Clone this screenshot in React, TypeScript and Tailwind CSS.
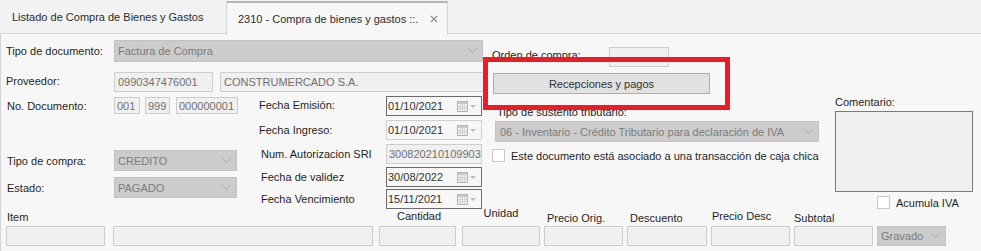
import React from "react";

const Chevron = () => (
  <svg width="9" height="6" viewBox="0 0 9 6" className="shrink-0">
    <path d="M0.5 0.5 L4.5 4.5 L8.5 0.5" fill="none" stroke="#a9a9a9" strokeWidth="1" />
  </svg>
);

const CalIcon = () => (
  <svg width="20" height="11" viewBox="0 0 20 11" className="shrink-0">
    <rect x="0.5" y="0.5" width="10" height="10" fill="#f4f4f4" stroke="#b5b5b5" />
    <rect x="1" y="1" width="9" height="2" fill="#c9c9c9" />
    <path d="M1 5.5 H10 M1 7.5 H10 M3.5 3 V10 M5.5 3 V10 M7.5 3 V10" stroke="#d2d2d2" strokeWidth="1" />
    <path d="M13 4 L19 4 L16 7 Z" fill="#bdbdbd" />
  </svg>
);

function Combo({ text, cls }: { text: string; cls: string }) {
  return (
    <div className={`flex items-center justify-between bg-[#cccccc] border border-[#c2c2c2] pl-[3px] pr-[5px] text-[#7b7b7b] ${cls}`}>
      <span className="whitespace-nowrap">{text}</span>
      <Chevron />
    </div>
  );
}

function Box({ text, cls }: { text?: string; cls: string }) {
  return (
    <div className={`flex items-center overflow-hidden whitespace-nowrap bg-[#f0f0f0] border border-[#cdcdcd] pl-[2px] text-[#6f6f6f] ${cls}`}>
      {text}
    </div>
  );
}

function DateBox({ text, dark }: { text: string; dark?: boolean }) {
  return (
    <div
      className={`flex items-center justify-between w-[96px] h-[20px] bg-[#f7f7f7] border pl-[1px] pr-[4px] text-[#333333] ${
        dark ? "border-[#6b6b6b]" : "border-[#d0d0d0]"
      }`}
    >
      <span>{text}</span>
      <CalIcon />
    </div>
  );
}

function Check() {
  return <div className="w-[13px] h-[13px] bg-white border border-[#c8c8c8] shrink-0" />;
}

export default function App() {
  return (
    <div className="w-[981px] h-[251px] overflow-hidden bg-[#f2f2f2] text-[11px] leading-[14px] text-[#1f1f1f] font-['Liberation_Sans',Arial,sans-serif] relative">
      {/* Tabs */}
      <div className="flex h-[34px]">
        <div className="w-[226px] h-[34px] border-b border-[#d4d4d4] flex items-center pl-[12px] text-[#2b2b2b]">
          Listado de Compra de Bienes y Gastos
        </div>
        <div className="w-[222px] h-[34px] mt-[1px] border-t-2 border-x border-t-[#b7b7b7] border-x-[#d4d4d4] bg-[#f7f7f7] flex items-center pl-[11px] pr-[9px] justify-between text-[#2b2b2b]">
          <span>2310 - Compra de bienes y gastos ::.</span>
          <svg width="8" height="8" viewBox="0 0 8 8">
            <path d="M1 1 L7 7 M7 1 L1 7" stroke="#8a8a8a" strokeWidth="1.1" />
          </svg>
        </div>
        <div className="flex-1 h-[34px] border-b border-[#d4d4d4]" />
      </div>

      {/* Body */}
      <div className="flex flex-col h-[217px] border-l border-[#d4d4d4] bg-[#f7f7f7]">
        <div className="flex h-[175px]">
          {/* Column A */}
          <div className="w-[489px] pl-[5px] flex flex-col shrink-0">
            <div className="mt-[6px] h-[22px] flex items-center">
              <div className="w-[108px]">Tipo de documento:</div>
              <Combo text="Factura de Compra" cls="w-[369px] h-[22px]" />
            </div>
            <div className="mt-[10px] h-[20px] flex">
              <div className="w-[108px] -mt-[3px] flex items-center">Proveedor:</div>
              <Box text="0990347476001" cls="w-[99px] h-[20px] pl-[3px]" />
              <Box text="CONSTRUMERCADO S.A." cls="ml-[7px] w-[267px] h-[20px] pl-[3px]" />
            </div>
            <div className="flex">
              <div className="w-[232px] flex flex-col">
                <div className="mt-[5px] h-[17px] flex items-center">
                  <div className="w-[108px] pl-[1px]">No. Documento:</div>
                  <Box text="001" cls="w-[26px] h-[17px]" />
                  <Box text="999" cls="ml-[5px] w-[25px] h-[17px]" />
                  <Box text="000000001" cls="ml-[6px] w-[62px] h-[17px]" />
                </div>
                <div className="mt-[36px] h-[21px] flex items-center">
                  <div className="w-[108px] pl-[1px]">Tipo de compra:</div>
                  <Combo text="CREDITO" cls="w-[123px] h-[21px]" />
                </div>
                <div className="mt-[6px] h-[21px] flex items-center">
                  <div className="w-[108px] pl-[1px]">Estado:</div>
                  <Combo text="PAGADO" cls="w-[123px] h-[21px]" />
                </div>
              </div>
              <div className="ml-[21px] w-[223px] flex flex-col">
                <div className="mt-[4px] h-[20px] flex items-center">
                  <div className="w-[127px] -mt-[3px]">Fecha Emisión:</div>
                  <DateBox text="01/10/2021" dark />
                </div>
                <div className="mt-[4px] h-[20px] flex items-center">
                  <div className="w-[127px]">Fecha Ingreso:</div>
                  <DateBox text="01/10/2021" />
                </div>
                <div className="mt-[4px] h-[20px] flex items-center">
                  <div className="w-[127px] pl-[2px]">Num. Autorizacion SRI</div>
                  <Box text="300820210109903·" cls="w-[96px] h-[20px]" />
                </div>
                <div className="mt-[3px] h-[20px] flex items-center">
                  <div className="w-[127px] pl-[2px]">Fecha de validez</div>
                  <DateBox text="30/08/2022" dark />
                </div>
                <div className="mt-[2px] h-[20px] flex items-center">
                  <div className="w-[127px] pl-[2px]">Fecha Vencimiento</div>
                  <DateBox text="15/11/2021" dark />
                </div>
              </div>
            </div>
          </div>

          {/* Column B */}
          <div className="w-[345px] flex flex-col shrink-0">
            <div className="mt-[13px] h-[20px] flex items-center">
              <div className="w-[119px] pl-[2px] -mt-[4px]">Orden de compra:</div>
              <Box cls="w-[60px] h-[20px]" />
            </div>
            <div className="mt-[6px] ml-[3px] w-[217px] h-[21px] bg-[#e1e1e1] border border-[#adadad] flex items-center justify-center text-[#333333]">
              Recepciones y pagos
            </div>
            <div className="mt-[11px] pl-[7px] h-[14px]">Tipo de sustento tributario:</div>
            <Combo text="06 - Inventario - Crédito Tributario para declaración de IVA" cls="mt-[2px] ml-[5px] w-[324px] h-[21px] pl-[4px]" />
            <div className="mt-[7px] ml-[2px] h-[13px] flex items-center">
              <Check />
              <span className="ml-[6px] whitespace-nowrap">Este documento está asociado a una transacción de caja chica</span>
            </div>
          </div>

          {/* Column C */}
          <div className="w-[146px] flex flex-col shrink-0">
            <div className="mt-[61px] h-[14px]">Comentario:</div>
            <div className="mt-[2px] w-[138px] h-[87px] bg-[#efefef] border border-[#7a7a7a]" />
            <div className="mt-[4px] ml-[42px] h-[13px] flex items-center">
              <Check />
              <span className="ml-[6px]">Acumula IVA</span>
            </div>
          </div>
        </div>

        {/* Bottom item row */}
        <div className="flex">
          <div className="ml-[5px] w-[99px] flex flex-col">
            <div className="h-[17px] flex items-start"><span className="mt-[1px] pl-[1px]">Item</span></div>
            <Box cls="w-[99px] h-[20px]" />
          </div>
          <div className="ml-[8px] w-[260px] flex flex-col">
            <div className="h-[17px]" />
            <Box cls="w-[260px] h-[20px]" />
          </div>
          <div className="ml-[6px] w-[77px] flex flex-col">
            <div className="h-[17px] flex items-start justify-center"><span className="pl-[3px]">Cantidad</span></div>
            <Box cls="w-[77px] h-[20px]" />
          </div>
          <div className="ml-[6px] w-[78px] flex flex-col">
            <div className="h-[17px] flex items-start justify-center"><span className="-mt-[3px]">Unidad</span></div>
            <Box cls="w-[78px] h-[20px]" />
          </div>
          <div className="ml-[4px] w-[79px] flex flex-col">
            <div className="h-[17px] flex items-start"><span className="mt-[2px] pl-[3px]">Precio Orig.</span></div>
            <Box cls="w-[79px] h-[20px]" />
          </div>
          <div className="ml-[4px] w-[80px] flex flex-col">
            <div className="h-[17px] flex items-start"><span className="mt-[2px] pl-[3px]">Descuento</span></div>
            <Box cls="w-[80px] h-[20px]" />
          </div>
          <div className="ml-[4px] w-[79px] flex flex-col">
            <div className="h-[17px] flex items-start"><span className="pl-[1px]">Precio Desc</span></div>
            <Box cls="w-[79px] h-[20px]" />
          </div>
          <div className="ml-[4px] w-[79px] flex flex-col">
            <div className="h-[17px] flex items-start"><span className="mt-[2px]">Subtotal</span></div>
            <Box cls="w-[79px] h-[20px]" />
          </div>
          <div className="ml-[4px] w-[69px] flex flex-col">
            <div className="h-[17px]" />
            <Combo text="Gravado" cls="w-[69px] h-[20px] pl-[2px]" />
          </div>
        </div>
      </div>

      {/* Red annotation box */}
      <div className="absolute left-[483px] top-[57px] w-[247px] h-[53px] border-[5px] border-[#ec1c24]" />
    </div>
  );
}
